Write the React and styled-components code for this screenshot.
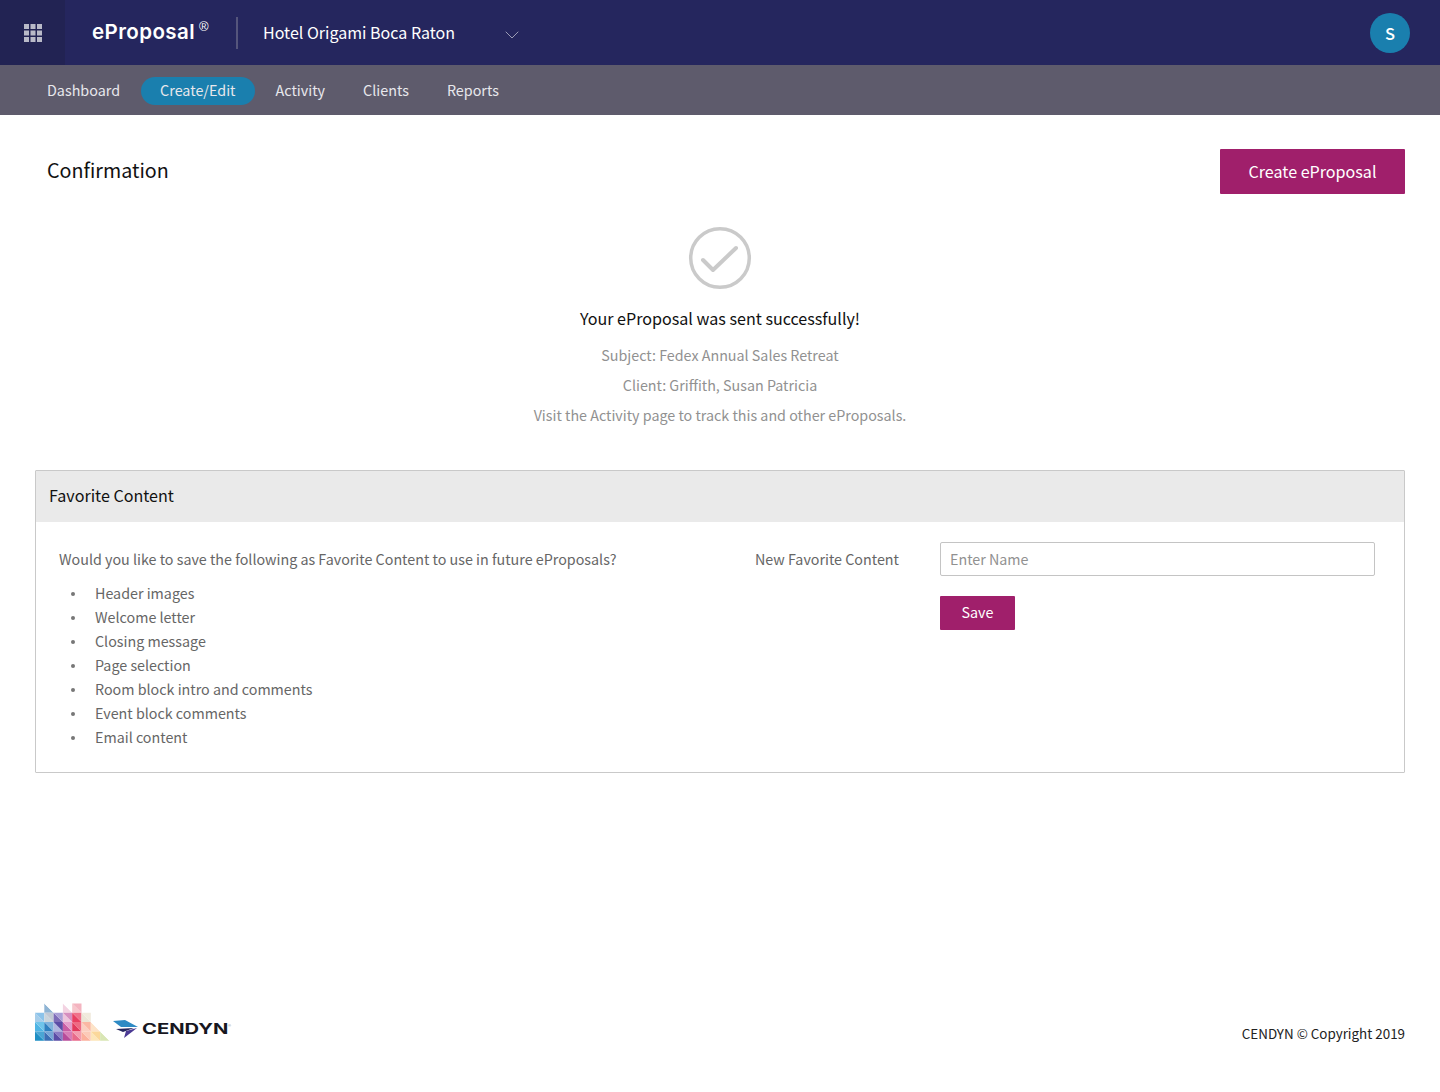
import React from 'react';
import styled, { createGlobalStyle } from 'styled-components';
import { ChevronDown } from 'lucide-react';

const GlobalStyle = createGlobalStyle`
  html, body {
    margin: 0;
    padding: 0;
    background: #fff;
    font-family: "Noto Sans CJK SC", "Open Sans", sans-serif;
  }
  * {
    box-sizing: border-box;
  }
`;

const Page = styled.div`
  display: flex;
  flex-direction: column;
  min-height: 1092px;
`;

const TopBar = styled.header`
  display: flex;
  align-items: center;
  height: 65px;
  background: #25265e;
  padding-right: 30px;
`;

const AppsButton = styled.div`
  display: grid;
  place-items: center;
  width: 65px;
  height: 100%;
  background: #222353;
`;

const Brand = styled.div`
  display: flex;
  align-items: flex-start;
  width: 144px;
  margin-left: 27px;
  padding-bottom: 2px;
  color: #fff;
  font-family: Inter, sans-serif;
  font-size: 20.5px;
  font-weight: 600;
  line-height: 32px;
  letter-spacing: 0.42px;
`;

const Registered = styled.sup`
  margin-left: 4px;
  font-family: "Liberation Sans", sans-serif;
  font-size: 13px;
  font-weight: 400;
  line-height: 22px;
  letter-spacing: 0;
`;

const Divider = styled.div`
  width: 2px;
  height: 32px;
  margin: 0 25px 0 0;
  background: #55557c;
`;

const HotelPicker = styled.div`
  display: flex;
  align-items: center;
  justify-content: space-between;
  width: 261px;
  padding-bottom: 2px;
  color: #fff;
  font-size: 16.05px;
  line-height: 32px;
`;

const Chevron = styled(ChevronDown)`
  color: #a9a9bf;
  margin-top: 6px;
`;

const Avatar = styled.div`
  display: grid;
  place-items: center;
  width: 40px;
  height: 40px;
  margin-left: auto;
  border-radius: 50%;
  background: #1a7fae;
  color: #fff;
  font-size: 16.5px;
  font-weight: 500;
`;

const NavBar = styled.nav`
  display: flex;
  align-items: center;
  height: 50px;
  padding: 2px 0 0 28px;
  background: #5e5b6c;
`;

const NavItem = styled.a`
  height: 28px;
  padding: 0 19px;
  margin-right: ${(p) => p.$gap || 0}px;
  border-radius: 14px;
  background: ${(p) => (p.$active ? '#1a7fae' : 'transparent')};
  color: #e8e8ec;
  font-size: 14.35px;
  line-height: 25px;
`;

const Main = styled.main`
  flex: 1;
  padding: 34px 35px 0;
`;

const TitleRow = styled.div`
  display: flex;
  align-items: center;
  justify-content: space-between;
  height: 45px;
  padding: 0 0 0 12px;
`;

const Title = styled.h1`
  margin: 0 0 3px;
  color: #111;
  font-size: 19.7px;
  font-weight: 400;
  line-height: 42px;
`;

const PrimaryButton = styled.button`
  height: ${(p) => (p.$small ? 34 : 45)}px;
  width: ${(p) => (p.$small ? 75 : 185)}px;
  padding: 0 0 ${(p) => (p.$small ? 4 : 2)}px;
  border: 0;
  border-radius: 1px;
  background: #a01f6b;
  color: #fff;
  font-family: inherit;
  font-size: ${(p) => (p.$small ? 14.3 : 16.1)}px;
`;

const Success = styled.section`
  display: flex;
  flex-direction: column;
  align-items: center;
  margin-top: 32px;
`;

const SuccessHeading = styled.div`
  margin: 13px 0 7px;
  color: #111;
  font-size: 16.1px;
  line-height: 30px;
`;

const SuccessLine = styled.div`
  color: #919191;
  font-size: 14.3px;
  line-height: 30px;
`;

const Card = styled.section`
  margin-top: 40px;
  height: 303px;
  border: 1px solid #c9c9c9;
  border-radius: 1px;
`;

const CardHeader = styled.div`
  height: 51px;
  padding-left: 13px;
  background: #eaeaea;
  color: #111;
  font-size: 16.1px;
  line-height: 48px;
`;

const CardBody = styled.div`
  display: flex;
  justify-content: space-between;
  padding: 20px 29px 0 23px;
`;

const Intro = styled.p`
  margin: 0 0 5px;
  color: #666;
  font-size: 14.3px;
  line-height: 34px;
`;

const ItemList = styled.ul`
  margin: 0;
  padding: 0;
  list-style: none;
  color: #666;
  font-size: 14.3px;
  line-height: 24px;
`;

const Item = styled.li`
  display: flex;
  &::before {
    content: "";
    flex: none;
    width: 4px;
    height: 4px;
    margin: 11px 20px 0 12px;
    border-radius: 50%;
    background: #777;
  }
`;

const FormGrid = styled.div`
  display: grid;
  grid-template-columns: 185px 435px;
  grid-row-gap: 20px;
  align-items: center;
  align-content: start;
`;

const FieldLabel = styled.label`
  margin-bottom: 2px;
  color: #666;
  font-size: 14.3px;
`;

const NameInput = styled.input`
  height: 34px;
  padding: 0 9px 2px;
  border: 1px solid #c4c4c4;
  border-radius: 2px;
  font-family: inherit;
  font-size: 14.3px;
  &::placeholder {
    color: #919191;
    opacity: 1;
  }
`;

const Footer = styled.footer`
  display: flex;
  align-items: flex-end;
  justify-content: space-between;
  height: 90px;
  padding: 0 35px 51px;
`;

const Copyright = styled.div`
  color: #222;
  font-size: 13.4px;
  line-height: 16px;
`;

const LogoRow = styled.div`
  display: flex;
  align-items: flex-end;
`;

const BirdMark = styled.svg`
  margin: 0 0 3px 3px;
`;

// the real wordmark is an extended face, no installed font is that wide
const Wordmark = styled.span`
  width: 86px;
  margin: 0 0 1px 4px;
  font-family: Inter, sans-serif;
  font-size: 14px;
  font-weight: 700;
  line-height: 22px;
  color: #17171f;
  transform: scaleX(1.44);
  transform-origin: left center;
`;

const Trademark = styled.span`
  align-self: center;
  margin-top: 8px;
  color: #888;
  font-family: "Liberation Sans", sans-serif;
  font-size: 4px;
  line-height: 4px;
`;

const Circle = styled.svg`
  display: block;
`;

function GridIcon() {
  const cells = [];
  for (let r = 0; r < 3; r++) {
    for (let c = 0; c < 3; c++) {
      cells.push(<rect key={`${r}-${c}`} x={c * 6.5} y={r * 6.5} width="5" height="5" fill="#b9bac8" />);
    }
  }
  return <svg width="18" height="18" viewBox="0 0 18 18">{cells}</svg>;
}

// triangles of the mosaic: column, row, colour of the two halves
const mosaic = [
  [0, 1, '#a5cdea', '#8cc3ea'], [0, 2, '#4fb4e4', '#6fc4ea'], [0, 3, '#1f8fc4', '#4aa6d4'],
  [1, 0, '#8fb4d4', '#fff'], [1, 1, '#c9d4dc', '#c0c8d4'], [1, 2, '#2f80c0', '#7fb2dc'], [1, 3, '#3b6fb4', '#76a6d6'],
  [2, 1, '#7d6bb8', '#a99fd6'], [2, 2, '#b0b6e0', '#5a4ca6'], [2, 3, '#5a4ca6', '#8a7cc4'],
  [3, 0, '#f3d3e2', '#fff'], [3, 1, '#edc4dc', '#d68fc0'], [3, 2, '#c95da4', '#e49ccb'], [3, 3, '#b84c9a', '#d77cb6'],
  [4, 0, '#f7c6cc', '#f4b4c0'], [4, 1, '#e83f62', '#f0718a'], [4, 2, '#e23a5e', '#ee6a84'], [4, 3, '#e86a8a', '#f39cae'],
  [5, 1, '#ece6d6', '#f1ebdd'], [5, 2, '#fbcfc0', '#fbb8a4'], [5, 3, '#fbb19c', '#fccab8'],
  [6, 2, '#fde3c8', '#fff'], [6, 3, '#fde6b8', '#fbd89a'],
  [7, 3, '#d9e6b4', '#fff'],
];

function CendynMosaic() {
  const size = 9.3;
  return (
    <svg width="75" height="38" viewBox="0 0 75 38">
      {mosaic.map(([c, r, a, b]) => {
        const x = c * size;
        const y = r * size + 0.5;
        return (
          <g key={`${c}-${r}`}>
            <polygon points={`${x},${y} ${x + size},${y + size} ${x},${y + size}`} fill={a} />
            <polygon points={`${x},${y} ${x + size},${y} ${x + size},${y + size}`} fill={b} />
          </g>
        );
      })}
    </svg>
  );
}

function CendynBird() {
  return (
    <BirdMark width="25" height="18" viewBox="0 0 25 18">
      <polygon points="0,1 12,0 25,7 8,7" fill="#2d8ac4" />
      <polygon points="3,9 21,8 10,12" fill="#25265e" />
      <polygon points="24,8 13,11 11,18" fill="#4b3a94" />
    </BirdMark>
  );
}

const items = [
  'Header images',
  'Welcome letter',
  'Closing message',
  'Page selection',
  'Room block intro and comments',
  'Event block comments',
  'Email content',
];

function App() {
  return (
    <Page>
      <GlobalStyle />
      <TopBar>
        <AppsButton><GridIcon /></AppsButton>
        <Brand>eProposal<Registered>®</Registered></Brand>
        <Divider />
        <HotelPicker>
          Hotel Origami Boca Raton
          <Chevron size={24} strokeWidth={0.9} />
        </HotelPicker>
        <Avatar>S</Avatar>
      </TopBar>
      <NavBar>
        <NavItem $gap={2}>Dashboard</NavItem>
        <NavItem $active $gap={2}>Create/Edit</NavItem>
        <NavItem>Activity</NavItem>
        <NavItem>Clients</NavItem>
        <NavItem>Reports</NavItem>
      </NavBar>
      <Main>
        <TitleRow>
          <Title>Confirmation</Title>
          <PrimaryButton>Create eProposal</PrimaryButton>
        </TitleRow>
        <Success>
          <Circle width="64" height="64" viewBox="0 0 64 64" fill="none" stroke="#cacaca" strokeWidth="3.5">
            <circle cx="32" cy="32" r="29.3" />
            <path d="M15 34 L25 44 L48 22" strokeWidth="4" strokeLinecap="round" strokeLinejoin="round" />
          </Circle>
          <SuccessHeading>Your eProposal was sent successfully!</SuccessHeading>
          <SuccessLine>Subject: Fedex Annual Sales Retreat</SuccessLine>
          <SuccessLine>Client: Griffith, Susan Patricia</SuccessLine>
          <SuccessLine>Visit the Activity page to track this and other eProposals.</SuccessLine>
        </Success>
        <Card>
          <CardHeader>Favorite Content</CardHeader>
          <CardBody>
            <div>
              <Intro>Would you like to save the following as Favorite Content to use in future eProposals?</Intro>
              <ItemList>
                {items.map((item) => <Item key={item}>{item}</Item>)}
              </ItemList>
            </div>
            <FormGrid>
              <FieldLabel>New Favorite Content</FieldLabel>
              <NameInput placeholder="Enter Name" />
              <span />
              <PrimaryButton $small>Save</PrimaryButton>
            </FormGrid>
          </CardBody>
        </Card>
      </Main>
      <Footer>
        <LogoRow>
          <CendynMosaic />
          <CendynBird />
          <Wordmark>CENDYN</Wordmark>
          <Trademark>®</Trademark>
        </LogoRow>
        <Copyright>CENDYN © Copyright 2019</Copyright>
      </Footer>
    </Page>
  );
}

export default App;
